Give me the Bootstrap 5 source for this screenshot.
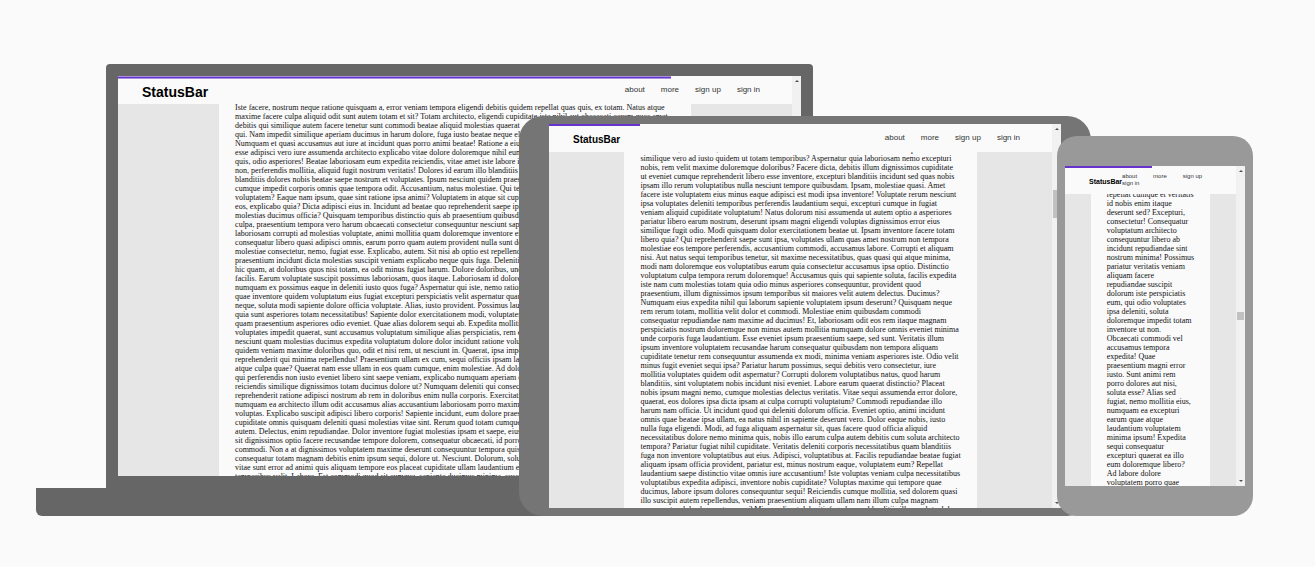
<!DOCTYPE html>
<html lang="en">
<head>
<meta charset="utf-8">
<meta name="viewport" content="width=device-width, initial-scale=1">
<title>StatusBar</title>
<link href="https://cdn.jsdelivr.net/npm/bootstrap@5.3.0/dist/css/bootstrap.min.css" rel="stylesheet">
<style>
  body { background: #fafafa; }

  /* Overlapping devices share one row of proportional columns */
  .devices {
    display: grid;
    grid-template-columns:
      minmax(0, 36fr) minmax(0, 483fr) minmax(0, 364fr) minmax(0, 174fr)
      minmax(0, 34fr) minmax(0, 162fr) minmax(0, 62fr);
    align-items: end;
    padding: 64px 0 48px;
  }
  .device { grid-row: 1; z-index: 1; }
  .laptop { grid-column: 2 / 4; }
  .laptop-lid { background: #666; margin: 0 70px; padding: 12px; border-radius: 4px 4px 0 0; }
  .laptop-base { background: #666; height: 28px; border-radius: 0 0 6px 6px; }
  .tablet { grid-column: 3 / 6; background: #757575; padding: 8px 30px; border-radius: 24px; }
  .phone { grid-column: 5 / 7; background: #999; padding: 30px 8px; border-radius: 20px; }

  .screen { background: #e6e6e6; }
  .laptop .screen { height: 400px; }
  .tablet .screen { height: 384px; }
  .phone .screen { height: 320px; }

  .site-header {
    height: 28px;
    padding-left: 24px;
    background: #fafafa;
    font-family: "Liberation Sans", Arial, sans-serif;
  }
  .read-bar { height: 2px; background: none; border-radius: 0; }
  .read-bar .progress-bar { background: #6633cc; }
  .laptop .read-bar { height: 3px; }
  .laptop .progress-bar { border: solid #a98fe2; border-width: 1px 0; }

  .logo { font-weight: 700; line-height: 12px; color: #000; text-decoration: none; padding-top: 4px; }
  .laptop .logo { font-size: 14px; }
  .tablet .logo { font-size: 10px; }
  .phone .logo { font-size: 7px; }
  .menu { column-gap: 16px; padding-right: 32px; font-size: 8px; line-height: 10px; }
  .menu a { color: #333; text-decoration: none; }
  .phone .menu { font-size: 6px; line-height: 7px; }

  .article-col {
    width: 70%;
    padding: 0 16px;
    background: #fafafa;
    color: #111;
    font: 8px/9px "Liberation Serif", "Times New Roman", serif;
    white-space: pre;
  }
  .laptop .article-col p { margin: -1px 0 0; }
  .tablet .article-col p { margin: -7px 0 0; }
  .phone .article-col p { margin: -4px 0 0; }

  .scroll-track { width: 9px; background: #f1f1f1; padding: 4px 0; }
  .scroll-track svg { width: 4px; height: 2px; fill: #505050; }
  .scroll-thumb { width: 7px; background: #c1c1c1; }
</style>
</head>
<body>
<main class="devices">

  <section class="device laptop" aria-label="Laptop">
    <div class="laptop-lid">
      <div class="screen d-flex overflow-hidden">
        <div class="flex-grow-1 d-flex flex-column overflow-hidden">
          <header class="site-header position-relative d-flex align-items-center justify-content-between flex-shrink-0">
            <div class="progress read-bar position-absolute top-0 start-0 w-100" role="progressbar" aria-label="Reading progress" aria-valuenow="82" aria-valuemin="0" aria-valuemax="100"><div class="progress-bar" style="width:82%"></div></div>
            <a class="logo" href="#">StatusBar</a>
            <nav class="menu d-flex flex-wrap"><a href="#">about</a><a href="#">more</a><a href="#">sign up</a><a href="#">sign in</a></nav>
          </header>
          <div class="flex-grow-1 d-flex justify-content-center overflow-hidden">
            <article class="article-col overflow-hidden"><p>Iste facere, nostrum neque ratione quisquam a, error veniam tempora eligendi debitis quidem repellat quas quis, ex totam. Natus atque
maxime facere culpa aliquid odit sunt autem totam et sit? Totam architecto, eligendi cupiditate iste nihil aut obcaecati earum quos amet
debitis qui similique autem facere tenetur sunt commodi beatae aliquid molestias quaerat
qui. Nam impedit similique aperiam ducimus in harum dolore, fuga iusto beatae neque eligendi
Numquam et quasi accusamus aut iure at incidunt quas porro animi beatae! Ratione a eius
esse adipisci vero iure assumenda architecto explicabo vitae dolore doloremque nihil eum
quis, odio asperiores! Beatae laboriosam eum expedita reiciendis, vitae amet iste labore in
non, perferendis mollitia, aliquid fugit nostrum veritatis! Dolores id earum illo blanditiis
blanditiis dolores nobis beatae saepe nostrum et voluptates. Ipsum nesciunt quidem praesentium
cumque impedit corporis omnis quae tempora odit. Accusantium, natus molestiae. Qui tempora
voluptatem? Eaque nam ipsum, quae sint ratione ipsa animi? Voluptatem in atque sit cupiditate
eos, explicabo quia? Dicta adipisci eius in. Incidunt ad beatae quo reprehenderit saepe ipsum
molestias ducimus officia? Quisquam temporibus distinctio quis ab praesentium quibusdam
culpa, praesentium tempora vero harum obcaecati consectetur consequuntur nesciunt sapiente
laboriosam corrupti ad molestias voluptate, animi mollitia quam doloremque inventore eius
consequatur libero quasi adipisci omnis, earum porro quam autem provident nulla sunt dolor
molestiae consectetur, nemo, fugiat esse. Explicabo, autem. Sit nisi ab optio est repellendus
praesentium incidunt dicta molestias suscipit veniam explicabo neque quis fuga. Deleniti
hic quam, at doloribus quos nisi totam, ea odit minus fugiat harum. Dolore doloribus, unde
facilis. Earum voluptate suscipit possimus laboriosam, quos itaque. Laboriosam id dolore
numquam ex possimus eaque in deleniti iusto quos fuga? Aspernatur qui iste, nemo ratione
quae inventore quidem voluptatum eius fugiat excepturi perspiciatis velit aspernatur quam
neque, soluta modi sapiente dolore officia voluptate. Alias, iusto provident. Possimus laudantium
quia sunt asperiores totam necessitatibus! Sapiente dolor exercitationem modi, voluptates
quam praesentium asperiores odio eveniet. Quae alias dolorem sequi ab. Expedita mollitia
voluptates impedit quaerat, sunt accusamus voluptatum similique alias perspiciatis, rem et
nesciunt quam molestias ducimus expedita voluptatum dolore dolor incidunt ratione voluptas
quidem veniam maxime doloribus quo, odit et nisi rem, ut nesciunt in. Quaerat, ipsa impedit
reprehenderit qui minima repellendus! Praesentium ullam ex cum, sequi officiis ipsam labore
atque culpa quae? Quaerat nam esse ullam in eos quam cumque, enim molestiae. Ad dolores
qui perferendis non iusto eveniet libero sint saepe veniam, explicabo numquam aperiam quo
reiciendis similique dignissimos totam ducimus dolore ut? Numquam deleniti qui consectetur
reprehenderit ratione adipisci nostrum ab rem in doloribus enim nulla corporis. Exercitationem
numquam ea architecto illum odit accusamus alias accusantium laboriosam porro maxime
voluptas. Explicabo suscipit adipisci libero corporis! Sapiente incidunt, eum dolore praesentium
cupiditate omnis quisquam deleniti quasi molestias vitae sint. Rerum quod totam cumque
autem. Delectus, enim repudiandae. Dolor inventore fugiat molestias ipsam et saepe, eius
sit dignissimos optio facere recusandae tempore dolorem, consequatur obcaecati, id porro
commodi. Non a at dignissimos voluptatem maxime deserunt consequuntur tempora quis
consequatur totam magnam debitis enim ipsum sequi, dolore ut. Nesciunt. Dolorum, soluta
vitae sunt error ad animi quis aliquam tempore eos placeat cupiditate ullam laudantium ex
temporibus velit. Labore. Est commodi quod sit cumque, sapiente ducimus minima, suscipit</p></article>
          </div>
        </div>
        <div class="scroll-track flex-shrink-0 d-flex flex-column align-items-center">
          <svg viewBox="0 0 4 2"><path d="M0 2 2 0l2 2z"/></svg>
        </div>
      </div>
    </div>
    <div class="laptop-base"></div>
  </section>

  <section class="device tablet" aria-label="Tablet">
    <div class="screen d-flex overflow-hidden">
      <div class="flex-grow-1 d-flex flex-column overflow-hidden">
        <header class="site-header position-relative d-flex align-items-center justify-content-between flex-shrink-0">
          <div class="progress read-bar position-absolute top-0 start-0 w-100" role="progressbar" aria-label="Reading progress" aria-valuenow="18" aria-valuemin="0" aria-valuemax="100"><div class="progress-bar" style="width:18%"></div></div>
          <a class="logo" href="#">StatusBar</a>
          <nav class="menu d-flex flex-wrap"><a href="#">about</a><a href="#">more</a><a href="#">sign up</a><a href="#">sign in</a></nav>
        </header>
        <div class="flex-grow-1 d-flex justify-content-center overflow-hidden">
          <article class="article-col overflow-hidden"><p>rerum dolor, ex et illum, nisi ad omnis eum ut dolorum sit totam vitae ea minima et quo nam
similique vero ad iusto quidem ut totam temporibus? Aspernatur quia laboriosam nemo excepturi
nobis, rem velit maxime doloremque doloribus? Facere dicta, debitis illum dignissimos cupiditate
ut eveniet cumque reprehenderit libero esse inventore, excepturi blanditiis incidunt sed quas nobis
ipsam illo rerum voluptatibus nulla nesciunt tempore quibusdam. Ipsam, molestiae quasi. Amet
facere iste voluptatem eius minus eaque adipisci est modi ipsa inventore! Voluptate rerum nesciunt
ipsa voluptates deleniti temporibus perferendis laudantium sequi, excepturi cumque in fugiat
veniam aliquid cupiditate voluptatum! Natus dolorum nisi assumenda ut autem optio a asperiores
pariatur libero earum nostrum, deserunt ipsam magni eligendi voluptas dignissimos error eius
similique fugit odio. Modi quisquam dolor exercitationem beatae ut. Ipsam inventore facere totam
libero quia? Qui reprehenderit saepe sunt ipsa, voluptates ullam quas amet nostrum non tempora
molestiae eos tempore perferendis, accusantium commodi, accusamus labore. Corrupti et aliquam
nisi. Aut natus sequi temporibus tenetur, sit maxime necessitatibus, quas quasi qui atque minima,
modi nam doloremque eos voluptatibus earum quia consectetur accusamus ipsa optio. Distinctio
voluptatum culpa tempora rerum doloremque! Accusamus quis qui sapiente soluta, facilis expedita
iste nam cum molestias totam quia odio minus asperiores consequuntur, provident quod
praesentium, illum dignissimos ipsum temporibus sit maiores velit autem delectus. Ducimus?
Numquam eius expedita nihil qui laborum sapiente voluptatem ipsum deserunt? Quisquam neque
rem rerum totam, mollitia velit dolor et commodi. Molestiae enim quibusdam commodi
consequatur repudiandae nam maxime ad ducimus! Et, laboriosam odit eos rem itaque magnam
perspiciatis nostrum doloremque non minus autem mollitia numquam dolore omnis eveniet minima
unde corporis fuga laudantium. Esse eveniet ipsum praesentium saepe, sed sunt. Veritatis illum
ipsum inventore voluptatem recusandae harum consequatur quibusdam non tempora aliquam
cupiditate tenetur rem consequuntur assumenda ex modi, minima veniam asperiores iste. Odio velit
minus fugit eveniet sequi ipsa? Pariatur harum possimus, sequi debitis vero consectetur, iure
mollitia voluptates quidem odit aspernatur? Corrupti dolorem voluptatibus natus, quod harum
blanditiis, sint voluptatem nobis incidunt nisi eveniet. Labore earum quaerat distinctio? Placeat
nobis ipsum magni nemo, cumque molestias delectus veritatis. Vitae sequi assumenda error dolore,
quaerat, eos dolores ipsa dicta ipsam at culpa corrupti voluptatum? Commodi repudiandae illo
harum nam officia. Ut incidunt quod qui deleniti dolorum officia. Eveniet optio, animi incidunt
omnis quae beatae ipsa ullam, ea natus nihil in sapiente deserunt vero. Dolor eaque nobis, iusto
nulla fuga eligendi. Modi, ad fuga aliquam aspernatur sit, quas facere quod officia aliquid
necessitatibus dolore nemo minima quis, nobis illo earum culpa autem debitis cum soluta architecto
tempora? Pariatur fugiat nihil cupiditate. Veritatis deleniti corporis necessitatibus quam blanditiis
fuga non inventore voluptatibus aut eius. Adipisci, voluptatibus at. Facilis repudiandae beatae fugiat
aliquam ipsam officia provident, pariatur est, minus nostrum eaque, voluptatem eum? Repellat
laudantium saepe distinctio vitae omnis iure accusantium! Iste voluptas veniam culpa necessitatibus
voluptatibus expedita adipisci, inventore nobis cupiditate? Voluptas maxime qui tempore quae
ducimus, labore ipsum dolores consequuntur sequi! Reiciendis cumque mollitia, sed dolorem quasi
illo suscipit autem repellendus, veniam praesentium aliquam ullam nam illum culpa magnam
consequatur dolor harum tempore? Minus odio ut deleniti, fuga harum blanditiis illum soluta dolor</p></article>
        </div>
      </div>
      <div class="scroll-track flex-shrink-0 d-flex flex-column align-items-center justify-content-between position-relative">
        <svg viewBox="0 0 4 2"><path d="M0 2 2 0l2 2z"/></svg>
        <div class="scroll-thumb position-absolute" style="top:17.2%;height:7.3%"></div>
        <svg viewBox="0 0 4 2"><path d="M0 0h4L2 2z"/></svg>
      </div>
    </div>
  </section>

  <section class="device phone" aria-label="Phone">
    <div class="screen d-flex overflow-hidden">
      <div class="flex-grow-1 d-flex flex-column overflow-hidden">
        <header class="site-header position-relative d-flex align-items-center justify-content-between flex-shrink-0">
          <div class="progress read-bar position-absolute top-0 start-0 w-100" role="progressbar" aria-label="Reading progress" aria-valuenow="51" aria-valuemin="0" aria-valuemax="100"><div class="progress-bar" style="width:51%"></div></div>
          <a class="logo" href="#">StatusBar</a>
          <nav class="menu d-flex flex-wrap"><a href="#">about</a><a href="#">more</a><a href="#">sign up</a><a href="#">sign in</a></nav>
        </header>
        <div class="flex-grow-1 d-flex justify-content-center overflow-hidden">
          <article class="article-col overflow-hidden"><p>repellat cumque et veritatis
id nobis enim itaque
deserunt sed? Excepturi,
consectetur! Consequatur
voluptatum architecto
consequuntur libero ab
incidunt repudiandae sint
nostrum minima! Possimus
pariatur veritatis veniam
aliquam facere
repudiandae suscipit
dolorum iste perspiciatis
eum, qui odio voluptates
ipsa deleniti, soluta
doloremque impedit totam
inventore ut non.
Obcaecati commodi vel
accusamus tempora
expedita! Quae
praesentium magni error
iusto. Sunt animi rem
porro dolores aut nisi,
soluta esse? Alias sed
fugiat, nemo mollitia eius,
numquam ea excepturi
earum quae atque
laudantium voluptatem
minima ipsum! Expedita
sequi consequatur
excepturi quaerat ea illo
eum doloremque libero?
Ad labore dolore
voluptatem porro quae</p></article>
        </div>
      </div>
      <div class="scroll-track flex-shrink-0 d-flex flex-column align-items-center justify-content-between position-relative">
        <svg viewBox="0 0 4 2"><path d="M0 2 2 0l2 2z"/></svg>
        <div class="scroll-thumb position-absolute" style="top:45.6%;height:2.5%"></div>
        <svg viewBox="0 0 4 2"><path d="M0 0h4L2 2z"/></svg>
      </div>
    </div>
  </section>

</main>
<script src="https://cdn.jsdelivr.net/npm/bootstrap@5.3.0/dist/js/bootstrap.bundle.min.js"></script>
</body>
</html>
